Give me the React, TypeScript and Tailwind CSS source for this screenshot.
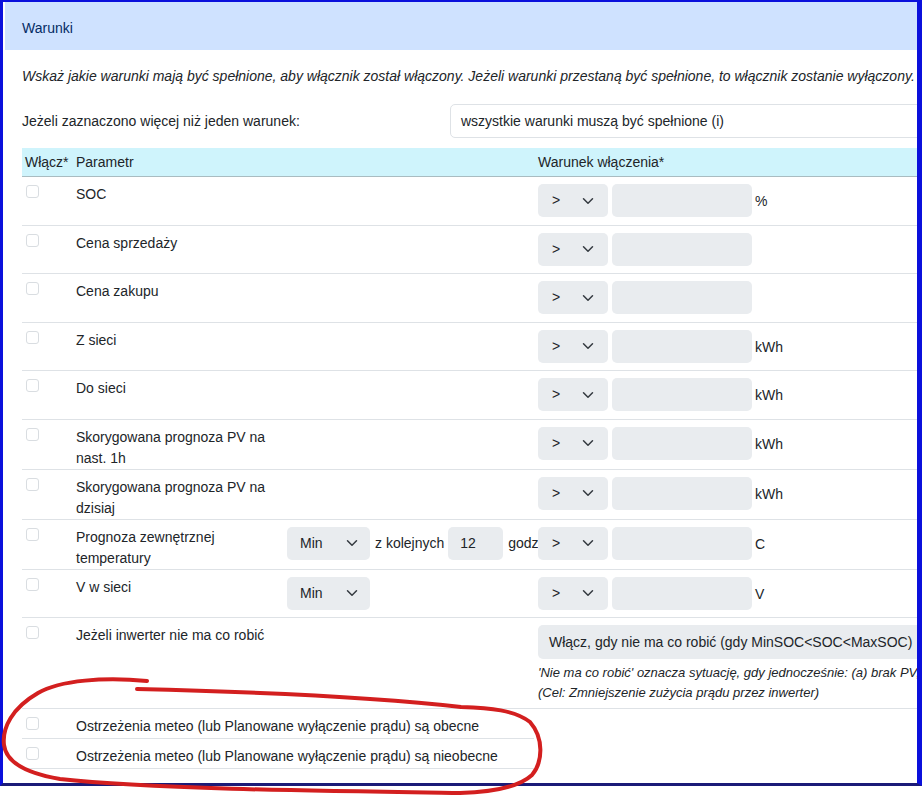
import React from "react";

type Row = {
  lines: string[];
  unit?: string;
  extra?: "range" | "min";
};

const rows: Row[] = [
  { lines: ["SOC"], unit: "%" },
  { lines: ["Cena sprzedaży"] },
  { lines: ["Cena zakupu"] },
  { lines: ["Z sieci"], unit: "kWh" },
  { lines: ["Do sieci"], unit: "kWh" },
  { lines: ["Skorygowana prognoza PV na", "nast. 1h"], unit: "kWh" },
  { lines: ["Skorygowana prognoza PV na", "dzisiaj"], unit: "kWh" },
  { lines: ["Prognoza zewnętrznej", "temperatury"], unit: "C", extra: "range" },
  { lines: ["V w sieci"], unit: "V", extra: "min" },
];

function Chevron() {
  return (
    <svg width="12" height="12" viewBox="0 0 16 16" fill="none" className="shrink-0">
      <path d="m2 5 6 6 6-6" stroke="#343a40" strokeWidth="2" strokeLinecap="round" strokeLinejoin="round" />
    </svg>
  );
}

function Checkbox() {
  return <div className="h-[13px] w-[13px] rounded-[3px] border border-[#d9dde1] bg-white" />;
}

function Select({ value, className }: { value: string; className: string }) {
  return (
    <div className={`flex h-[33px] shrink-0 items-center justify-between rounded-[5px] bg-[#e9ecef] ${className}`}>
      <span>{value}</span>
      <Chevron />
    </div>
  );
}

function Input({ value, className }: { value?: string; className: string }) {
  return (
    <div className={`flex h-[33px] shrink-0 items-center rounded-[5px] bg-[#e9ecef] ${className}`}>
      {value}
    </div>
  );
}

function ConditionRow({ row }: { row: Row }) {
  return (
    <div className="flex border-b border-[#dee2e6]">
      <div className="w-[50px] shrink-0 pt-[8px] pl-[4px]">
        <Checkbox />
      </div>
      <div className="w-[211px] shrink-0 pt-[7px] pl-[4px] leading-[21px]">
        {row.lines.map(line => (
          <div key={line}>{line}</div>
        ))}
      </div>
      <div className="flex w-[255px] shrink-0 items-start pt-[7px] pl-[4px] whitespace-nowrap">
        {row.extra && <Select value="Min" className="w-[83px] pl-[13px] pr-[12px]" />}
        {row.extra === "range" && (
          <>
            <span className="ml-[5px] leading-[33px]">z kolejnych</span>
            <Input value="12" className="ml-[4px] w-[55px] pl-[12px]" />
            <span className="ml-[5px] leading-[33px]">godz</span>
          </>
        )}
      </div>
      <div className="flex items-center self-start pt-[7px] pb-[7.5px]">
        <Select value=">" className="w-[70px] pl-[14px] pr-[14px]" />
        <Input className="ml-[4px] w-[140px]" />
        {row.unit && <span className="ml-[3px] pt-[2px]">{row.unit}</span>}
      </div>
    </div>
  );
}

function SimpleRow({ label }: { label: string }) {
  return (
    <div className="flex border-b border-[#dee2e6]">
      <div className="w-[50px] shrink-0 pt-[8px] pl-[4px]">
        <Checkbox />
      </div>
      <div className="pt-[7px] pb-[1px] pl-[4px] leading-[21px] whitespace-nowrap">{label}</div>
    </div>
  );
}

export default function App() {
  return (
    <div className="relative h-[796px] w-[922px] overflow-hidden bg-white font-['Liberation_Sans',Arial,sans-serif] text-[14px] text-[#212529]">
      <div className="h-[786px] overflow-hidden border-t-2 border-r-[5px] border-b-[3px] border-l-[3px] border-[#0b10dc] border-b-[#1b1b78] pl-[2px]">
        <div className="w-[1300px]">
          <div className="flex h-[48px] items-center bg-[#cfe2ff] pt-[5px] pl-[17px] text-[#052c65]">Warunki</div>

          <div className="pl-[17px]">
            <p className="pt-[16px] leading-[21px] whitespace-nowrap italic">
              Wskaż jakie warunki mają być spełnione, aby włącznik został włączony. Jeżeli warunki przestaną być
              spełnione, to włącznik zostanie wyłączony. Dane są odświeżane co kilka minut.
            </p>

            <div className="mt-[17px] flex h-[34px] items-center">
              <span className="w-[428px] shrink-0">Jeżeli zaznaczono więcej niż jeden warunek:</span>
              <div className="flex h-[34px] flex-1 items-center rounded-l-[5px] border border-[#dee2e6] pl-[10px]">
                wszystkie warunki muszą być spełnione (i)
              </div>
            </div>

            <div className="mt-[10px]">
              <div className="flex h-[29px] items-center border-b border-[#a9bcc1] bg-[#cff4fc]">
                <div className="w-[50px] shrink-0 pl-[3px]">Włącz*</div>
                <div className="w-[211px] shrink-0 pl-[4px]">Parametr</div>
                <div className="w-[255px] shrink-0" />
                <div>Warunek włączenia*</div>
              </div>

              {rows.map(row => (
                <ConditionRow key={row.lines.join(" ")} row={row} />
              ))}

              <div className="flex border-b border-[#dee2e6]">
                <div className="w-[50px] shrink-0 pt-[8px] pl-[4px]">
                  <Checkbox />
                </div>
                <div className="w-[211px] shrink-0 pt-[7px] pl-[4px] leading-[21px]">Jeżeli inwerter nie ma co robić</div>
                <div className="w-[255px] shrink-0" />
                <div className="pt-[7px] pb-[5px]">
                  <div className="flex h-[34px] w-[600px] items-center rounded-[5px] bg-[#e9ecef] pl-[11px]">
                    Włącz, gdy nie ma co robić (gdy MinSOC&lt;SOC&lt;MaxSOC)
                  </div>
                  <div className="mt-[4px] text-[13px] leading-[20px] whitespace-nowrap italic">
                    <div>'Nie ma co robić' oznacza sytuację, gdy jednocześnie: (a) brak PV, (b) bateria nie jest ładowana</div>
                    <div>(Cel: Zmniejszenie zużycia prądu przez inwerter)</div>
                  </div>
                </div>
              </div>

              <div className="w-[512px]">
                <SimpleRow label="Ostrzeżenia meteo (lub Planowane wyłączenie prądu) są obecne" />
                <SimpleRow label="Ostrzeżenia meteo (lub Planowane wyłączenie prądu) są nieobecne" />
              </div>
            </div>
          </div>
        </div>
      </div>

      <svg className="pointer-events-none absolute inset-0" width="922" height="796" viewBox="0 0 922 796" fill="none">
        <path
          d="M147 681 C105 677 60 680 38 693 C12 708 2 728 4 745 C6 762 25 773 60 779 C150 789 320 791 460 793 C495 792 520 786 532 775 C543 762 544 738 530 722 C515 710 490 708 461 707 C400 700 300 693 137 689"
          stroke="#d31f1f"
          strokeWidth="4"
          strokeLinecap="round"
          strokeLinejoin="round"
        />
      </svg>
    </div>
  );
}
